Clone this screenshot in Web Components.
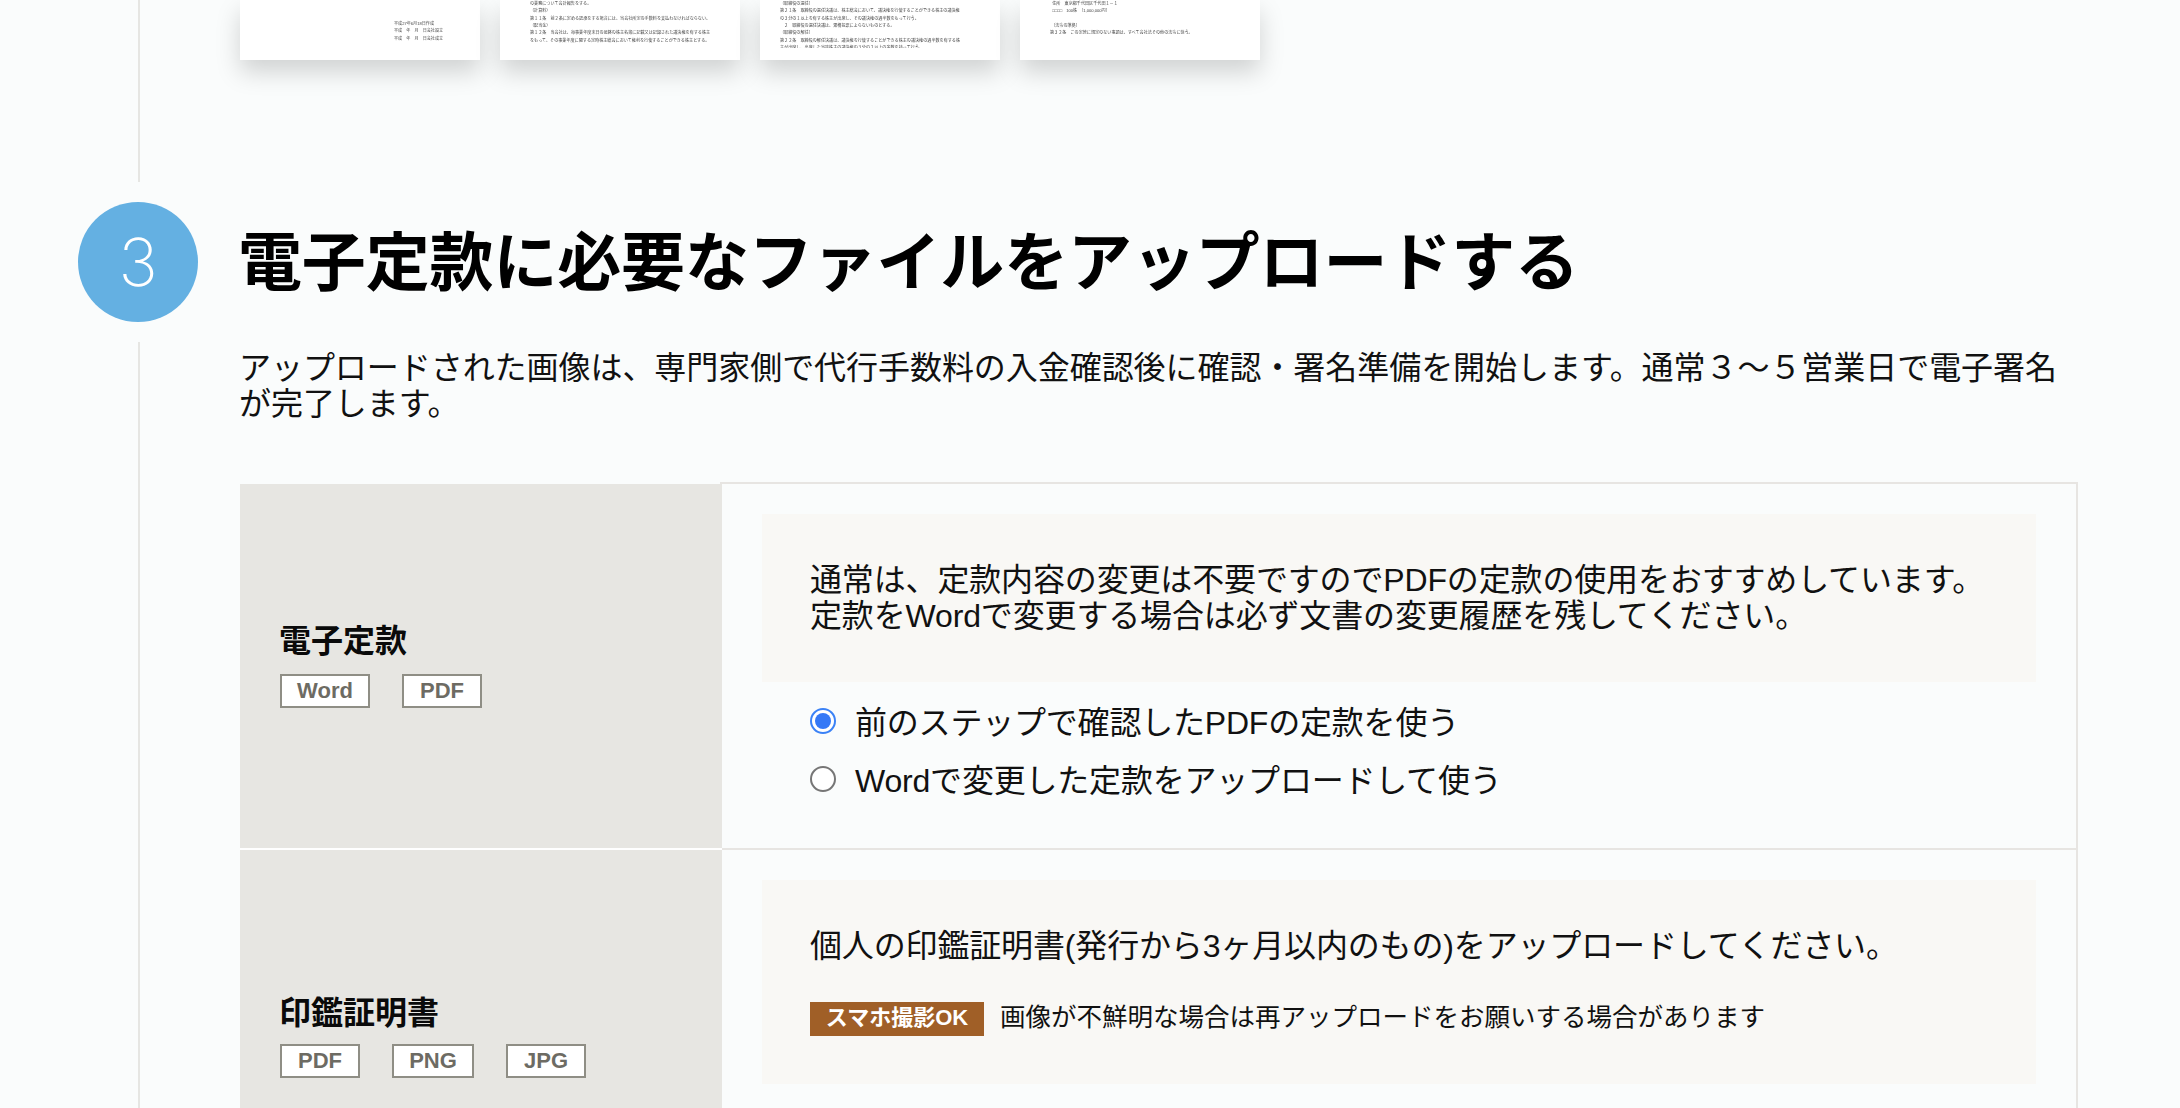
<!DOCTYPE html>
<html lang="ja"><head><meta charset="utf-8"><title>電子定款</title>
<style>
html,body{margin:0;padding:0;height:1108px;overflow:hidden;background:#fafcfc}
body{font-family:"Liberation Sans","Noto Sans CJK JP",sans-serif;color:#0c0c0c}
</style></head><body>
<template id="t-page"><style>
:host{display:grid;grid-template-columns:240px 1fr;height:1108px;padding-right:102px;box-sizing:border-box}
</style><slot name="rail"></slot><div><slot></slot></div></template>

<template id="t-rail"><style>
:host{display:flex;flex-direction:column;padding-left:78px;box-sizing:border-box;height:1108px}
.l{width:2px;margin-left:60px;background:#e6e6e3}
.a{height:182px}.b{flex:1;margin-top:20px}
.c{width:120px;height:120px;margin-top:20px;border-radius:50%;background:#64b0e2;color:#fff;display:flex;align-items:center;justify-content:center;font:200 66px/1 Inter,"Liberation Sans",sans-serif}
</style><div class="l a"></div><div class="c"><slot></slot></div><div class="l b"></div></template>

<template id="t-docs"><style>
:host{display:flex;gap:20px;height:60px}
</style><slot></slot></template>

<template id="t-doc"><style>
:host{display:flex;flex-direction:column;justify-content:flex-end;width:240px;height:60px;background:#fff;box-shadow:0 12px 24px rgba(0,0,0,.17);box-sizing:border-box;font-size:4.1px;line-height:7.35px;color:#444;white-space:nowrap;overflow:visible}
div{filter:blur(.6px);overflow:hidden}
</style><div part="b"><slot></slot></div></template>

<template id="t-head"><style>
:host{display:block;margin-top:165px}
h2{margin:0 0 0 -2px;font-size:64px;line-height:77px;font-weight:700;color:#000;letter-spacing:-.15px}
p{margin:48px 0 0 -1px;font-size:32px;line-height:36px;color:#111;letter-spacing:-.05px}
</style><h2><slot name="title"></slot></h2><p><slot></slot></p></template>

<template id="t-table"><style>
:host{display:block;margin-top:60px}
</style><slot></slot></template>

<template id="t-row"><style>
:host{display:grid;grid-template-columns:480px 1fr}
.th{position:relative;margin-right:-2px;background:#e7e6e2;border-bottom:2px solid #fff;background-clip:padding-box;padding-left:40px;display:flex;flex-direction:column;justify-content:center;box-sizing:border-box}
:host([first]) .th{margin-top:2px;padding-bottom:2px}
.name{font-size:32px;line-height:38px;font-weight:700;color:#0a0a0a;margin-left:-1px}
.tags{display:flex;gap:32px;margin-top:12px}
:host([first]) .tags{margin-top:14px}
.td{border-right:2px solid #e7e5e2;border-bottom:2px solid #e7e5e2;padding:30px 40px 40px 42px;box-sizing:border-box}
:host([first]) .td{border-top:2px solid #e7e5e2}
:host([last]) .td{min-height:374px}
</style><div class="th"><div class="name"><slot name="name"></slot></div><div class="tags"><slot name="tag"></slot></div></div><div class="td"><slot></slot></div></template>

<template id="t-tag"><style>
:host{display:flex;align-items:center;justify-content:center;height:34px;box-sizing:border-box;border:2px solid #8f8e85;background:#fff;color:#6d6b63;font-size:22px;font-weight:700;line-height:1}
</style><slot></slot></template>

<template id="t-note"><style>
:host{display:block;background:#f9f8f5;padding:48px 20px 48px 48px;font-size:32px;line-height:36px;color:#111;letter-spacing:-.15px}
</style><slot></slot></template>

<template id="t-radio"><style>
:host{display:flex;align-items:center;gap:19px;height:58px;margin-left:48px;font-size:32px;color:#111;letter-spacing:-.2px}
span{padding-bottom:2px}
i{flex:none;width:26px;height:26px;border-radius:50%;border:2px solid #767676;background:#fff;box-sizing:border-box;position:relative}
:host([checked]) i{border-color:#3b82f6}
:host([checked]) i::after{content:"";position:absolute;inset:3px;border-radius:50%;background:#3478f6}
</style><i></i><span><slot></slot></span></template>

<template id="t-ok"><style>
:host{display:flex;align-items:center;gap:16px;margin-top:38px;height:34px;font-size:25.5px;line-height:30px;letter-spacing:0;color:#111}
span{padding-bottom:4px}
b{flex:none;height:34px;width:174px;background:#a05f27;color:#fff;font-size:22px;line-height:32px;text-align:center;font-weight:700}
</style><b><slot name="badge"></slot></b><span><slot></slot></span></template>

<upload-page>
  <step-rail slot="rail">3</step-rail>
  <doc-row>
    <doc-thumb style="padding:0 0 18px 154px">
      平成27年6月18日作成<br>平成　年　月　日会社設立<br>平成　年　月　日会社成立
    </doc-thumb>
    <doc-thumb style="padding:0 0 17px 30px">
      の業務について会計報告をする。<br>（計算料）<br>第１１条　前２条に定める認承をする場合には、当会社所定の手数料を支払わなければならない。<br>（配当金）<br>第１２条　当会社は、毎事業年度末日の最終の株主名簿に記載又は記録された議決権を有する株主<br>をもって、その事業年度に関する定時株主総会において権利を行使することができる株主とする。
    </doc-thumb>
    <doc-thumb style="padding:0 0 12px 20px">
      （取締役の選任）<br>第２１条　取締役の選任決議は、株主総会において、議決権を行使することができる株主の議決権<br>の３分の１以上を有する株主が出席し、その議決権の過半数をもって行う。<br>　２　取締役の選任決議は、累積投票によらないものとする。<br>（取締役の解任）<br>第２２条　取締役の解任決議は、議決権を行使することができる株主の議決権の過半数を有する株<br>主が出席し、出席した当該株主の議決権の３分の２以上の多数を持って行う。
    </doc-thumb>
    <doc-thumb style="padding:0 0 26px 30px">
      &nbsp;&nbsp;住所　東京都千代田区千代田１－１<br>&nbsp;&nbsp;□□□□　100株　（1,000,000円）<br><br>&nbsp;（法令の準拠）<br>第３２条　この定款に規定のない事項は、すべて会社法その他の法令に従う。
    </doc-thumb>
  </doc-row>
  <step-head>
    <span slot="title">電子定款に必要なファイルをアップロードする</span>
    アップロードされた画像は、専門家側で代行手数料の入金確認後に確認・署名準備を開始します。通常３〜５営業日で電子署名が完了します。
  </step-head>
  <upload-table>
    <upload-row first>
      <span slot="name">電子定款</span>
      <file-tag slot="tag" style="width:90px">Word</file-tag>
      <file-tag slot="tag" style="width:80px">PDF</file-tag>
      <note-box>通常は、定款内容の変更は不要ですのでPDFの定款の使用をおすすめしています。<br>定款をWordで変更する場合は必ず文書の変更履歴を残してください。</note-box>
      <radio-opt checked style="margin-top:10px">前のステップで確認したPDFの定款を使う</radio-opt>
      <radio-opt>Wordで変更した定款をアップロードして使う</radio-opt>
    </upload-row>
    <upload-row last>
      <span slot="name">印鑑証明書</span>
      <file-tag slot="tag" style="width:80px">PDF</file-tag>
      <file-tag slot="tag" style="width:82px">PNG</file-tag>
      <file-tag slot="tag" style="width:80px">JPG</file-tag>
      <note-box>個人の印鑑証明書(発行から3ヶ月以内のもの)をアップロードしてください。
        <ok-line><span slot="badge">スマホ撮影OK</span>画像が不鮮明な場合は再アップロードをお願いする場合があります</ok-line>
      </note-box>
    </upload-row>
  </upload-table>
</upload-page>
<script>
const map={'upload-page':'t-page','step-rail':'t-rail','doc-row':'t-docs','doc-thumb':'t-doc','step-head':'t-head','upload-table':'t-table','upload-row':'t-row','file-tag':'t-tag','note-box':'t-note','radio-opt':'t-radio','ok-line':'t-ok'};
for(const [n,t] of Object.entries(map)){
  customElements.define(n,class extends HTMLElement{constructor(){super();this.attachShadow({mode:'open'}).appendChild(document.getElementById(t).content.cloneNode(true));}});
}
</script>
</body></html>
